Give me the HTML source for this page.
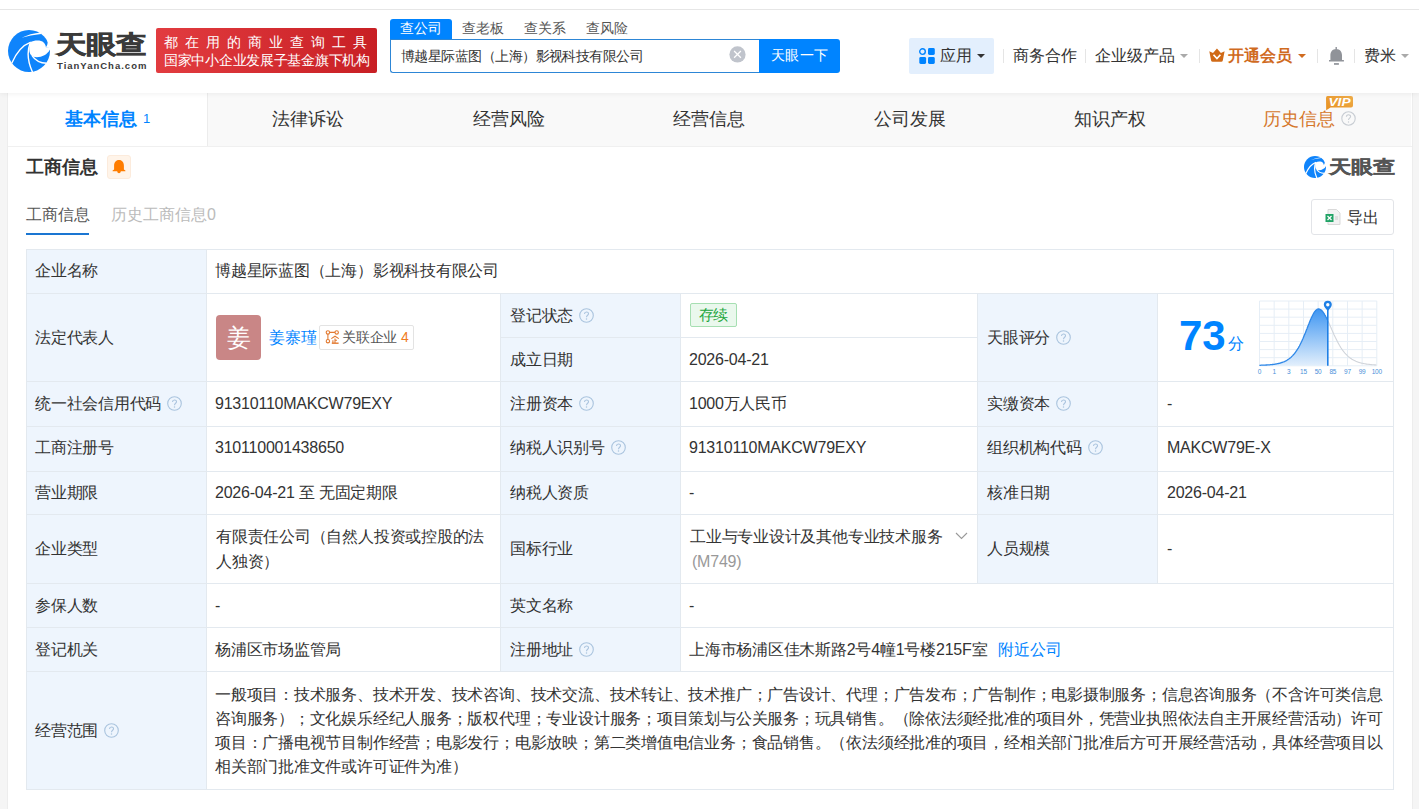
<!DOCTYPE html>
<html><head><meta charset="utf-8">
<style>
*{box-sizing:border-box;margin:0;padding:0}
body{width:1419px;height:809px;overflow:hidden;background:#f5f5f5;position:relative;font-family:"Liberation Sans",sans-serif;color:#333;}
.a{position:absolute;white-space:nowrap}
#hdr{position:absolute;left:0;top:0;width:1419px;height:93px;background:#fff;box-shadow:0 1px 5px rgba(0,0,0,.06);z-index:5}
#topline{position:absolute;left:0;top:9px;width:1419px;height:1px;background:#e6e6e6}
#card{position:absolute;left:7px;top:93px;width:1406px;height:716px;background:#fff;border-left:1px solid #ededed;border-right:1px solid #ededed}
.tab{position:absolute;top:93px;height:53px;background:#f9f9f9;font-size:18px;color:#333;text-align:center;line-height:52px}
.lbl{position:absolute;background:#eef5fd;font-size:16px;letter-spacing:-0.22px;color:#333;padding-left:8px;white-space:nowrap}
.val{position:absolute;font-size:16px;letter-spacing:-0.22px;color:#333;padding-left:8px;white-space:nowrap}
.hl{position:absolute;height:1px;background:#e3e9ef}
.vl{position:absolute;width:1px;background:#e3e9ef}
.q{display:inline-block;width:15px;height:15px;vertical-align:-2px;margin-left:6px}
.avatar{position:absolute;left:9px;top:21px;width:45px;height:45px;background:#c98686;border-radius:4px;color:#fff;font-size:24px;text-align:center;line-height:45px}
.rel{position:absolute;left:112px;top:31px;width:95px;height:25px;border:1px solid #e3e3e3;border-radius:2px;font-size:14px;line-height:23px}
.tag{position:absolute;left:9px;top:9px;width:47px;height:24px;background:#eaf8ed;border:1px solid #a6dfb2;border-radius:2px;color:#22a63d;font-size:15px;text-align:center;line-height:22px}
</style></head><body>
<div id="hdr">
  <div id="topline"></div>
  <!-- logo -->
  <svg class="a" style="left:8px;top:30px" width="42" height="42" viewBox="0 0 42 42">
    <circle cx="21" cy="21" r="21" fill="#0f84fb"/>
    <path d="M22.3 12.3 C 26 10.2, 33 9.8, 35.6 12.6 C 37 14, 37.8 15.5, 37.9 17.2 L 43 17 L 43 19.6 L 41.8 19.7 C 39 25.5, 31 28.5, 25 26.6 C 21 24.5, 20.3 19, 22.3 12.3 Z" fill="#fff"/>
    <path d="M32.2 2.6 C 36.5 4.5, 40 8.5, 39.6 13 C 39.4 14.8, 38.8 16.2, 37.9 17.2 L 43 17 L 43 0 L 32 0 Z" fill="#fff"/>
    <path d="M13.6 7.8 Q 22 3.6, 32.8 2.5 L 33.2 3.9 Q 22 5, 13.6 7.8 Z" fill="#fff"/>
    <path d="M22.8 12.1 C 15 15, 8 23, 3.6 33.5" stroke="#fff" stroke-width="1.4" fill="none"/>
    <path d="M22.3 12.5 C 19.3 20, 18.8 30, 24.8 42.8" stroke="#fff" stroke-width="1.4" fill="none"/>
    <path d="M24.2 25.8 C 27 30, 32 33, 38.8 33.3" stroke="#fff" stroke-width="1.4" fill="none"/>
  </svg>
  <div class="a" style="left:56px;top:30px;font-size:29px;font-weight:bold;color:#3a3a3a;letter-spacing:0px;line-height:34px;-webkit-text-stroke:0.7px #3a3a3a;transform-origin:0 0;transform:scale(1.04,0.85)">天眼查</div>
  <div class="a" style="left:57px;top:60px;font-size:9.5px;font-weight:bold;color:#3a3a3a;letter-spacing:1px;line-height:12px">TianYanCha.com</div>
  <!-- red banner -->
  <div class="a" style="left:156px;top:28px;width:221px;height:45px;border-radius:2px;background:linear-gradient(90deg,#e23c40,#c81f24)"></div>
  <div class="a" style="left:164px;top:34px;font-size:14px;color:#fff;letter-spacing:7.05px;line-height:17px">都在用的商业查询工具</div>
  <div class="a" style="left:164px;top:52px;font-size:14px;letter-spacing:-0.28px;color:#fff;line-height:17px">国家中小企业发展子基金旗下机构</div>
  <!-- search tabs -->
  <div class="a" style="left:390px;top:19px;width:62px;height:21px;background:#0084ff;border-radius:3px 3px 0 0"></div>
  <div class="a" style="left:400px;top:20px;font-size:13.5px;color:#fff;line-height:18px">查公司</div>
  <div class="a" style="left:462px;top:20px;font-size:13.5px;color:#555;line-height:18px">查老板</div>
  <div class="a" style="left:524px;top:20px;font-size:13.5px;color:#555;line-height:18px">查关系</div>
  <div class="a" style="left:586px;top:20px;font-size:13.5px;color:#555;line-height:18px">查风险</div>
  <div class="a" style="left:390px;top:39px;width:372px;height:34px;border:1px solid #2d86d6;border-right:none;border-radius:0 0 0 3px;background:#fff"></div>
  <div class="a" style="left:401px;top:47px;font-size:14px;letter-spacing:-0.55px;color:#333;line-height:18px">博越星际蓝图（上海）影视科技有限公司</div>
  <svg class="a" style="left:729px;top:46px" width="17" height="17" viewBox="0 0 17 17"><circle cx="8.5" cy="8.4" r="8.1" fill="#c0c4cc"/><path d="M5.1 5 L11.9 11.8 M11.9 5 L5.1 11.8" stroke="#fff" stroke-width="1.25"/></svg>
  <div class="a" style="left:759px;top:39px;width:81px;height:34px;background:#0084ff;border-radius:0 3px 3px 0"></div>
  <div class="a" style="left:771px;top:46px;font-size:14px;letter-spacing:0.4px;color:#fff;line-height:18px">天眼一下</div>
  <!-- right nav -->
  <div class="a" style="left:909px;top:38px;width:85px;height:36px;background:#e3effd;border-radius:2px"></div>
  <svg class="a" style="left:919px;top:48px" width="17" height="17" viewBox="0 0 17 17"><circle cx="3.5" cy="3.6" r="2.8" fill="none" stroke="#0084ff" stroke-width="1.4"/><rect x="9" y="0.1" width="6.8" height="6.8" rx="1.4" fill="#0084ff"/><rect x="0.3" y="9.1" width="6.8" height="6.8" rx="1.4" fill="#0084ff"/><rect x="9" y="9.1" width="6.8" height="6.8" rx="1.4" fill="#0084ff"/></svg>
  <div class="a" style="left:940px;top:46px;font-size:15.5px;color:#333;line-height:19px">应用</div>
  <svg class="a" style="left:976px;top:53px" width="10" height="6" viewBox="0 0 10 6"><path d="M1 1 L9 1 L5 5 Z" fill="#333"/></svg>
  <div class="a" style="left:1003px;top:49px;width:1px;height:14px;background:#e5e5e5"></div>
  <div class="a" style="left:1013px;top:46px;font-size:15.5px;color:#333;line-height:19px">商务合作</div>
  <div class="a" style="left:1085px;top:49px;width:1px;height:14px;background:#e5e5e5"></div>
  <div class="a" style="left:1095px;top:46px;font-size:15.5px;color:#333;line-height:19px">企业级产品</div>
  <svg class="a" style="left:1179px;top:53px" width="10" height="6" viewBox="0 0 10 6"><path d="M1 1 L9 1 L5 5 Z" fill="#aaa"/></svg>
  <div class="a" style="left:1199px;top:49px;width:1px;height:14px;background:#e5e5e5"></div>
  <svg class="a" style="left:1206px;top:46px" width="22" height="18" viewBox="0 0 22 18"><path d="M3.3 5.2 L7 6.9 L10.95 2.5 L14.9 6.9 L18.6 5.2 L16.8 14.5 Q16.5 15.7 15.3 15.7 L6.6 15.7 Q5.4 15.7 5.1 14.5 Z" fill="#d06a17"/><path d="M7.5 8.8 L10.95 12.6 L14.4 8.8" stroke="#fff" stroke-width="1.7" fill="none"/></svg>
  <div class="a" style="left:1228px;top:46px;font-size:15.5px;font-weight:bold;color:#d06b1f;line-height:19px">开通会员</div>
  <svg class="a" style="left:1297px;top:53px" width="10" height="6" viewBox="0 0 10 6"><path d="M1 1 L9 1 L5 5 Z" fill="#d06b1f"/></svg>
  <div class="a" style="left:1317px;top:49px;width:1px;height:14px;background:#e5e5e5"></div>
  <svg class="a" style="left:1328px;top:46px" width="17" height="20" viewBox="0 0 17 20"><path d="M8.2 2.9 C 4.5 2.9, 2.4 5.8, 2.4 9 L 2.4 14 L 1 14 L 1 15.4 L 15.9 15.4 L 15.9 14 L 14 14 L 14 9 C 14 5.8, 11.9 2.9, 8.2 2.9 Z" fill="#909399"/><rect x="7.5" y="1" width="1.4" height="2.5" fill="#909399"/><rect x="6" y="17.1" width="4.9" height="1.7" fill="#909399"/></svg>
  <div class="a" style="left:1354px;top:49px;width:1px;height:14px;background:#e5e5e5"></div>
  <div class="a" style="left:1364px;top:46px;font-size:15.5px;color:#333;line-height:19px">费米</div>
  <svg class="a" style="left:1400px;top:53px" width="10" height="6" viewBox="0 0 10 6"><path d="M1 1 L9 1 L5 5 Z" fill="#aaa"/></svg>
</div>

<div id="card"></div>
<!-- tabs -->
<div class="tab" style="left:8px;width:199px;background:#fff;color:#0084ff;font-weight:bold">基本信息<span style="font-size:13px;font-weight:normal;margin-left:6px;vertical-align:2px">1</span></div>
<div class="a" style="left:207px;top:93px;width:1px;height:53px;background:#ececec"></div>
<div class="tab" style="left:208px;width:200px">法律诉讼</div>
<div class="tab" style="left:408px;width:201px">经营风险</div>
<div class="tab" style="left:609px;width:200px">经营信息</div>
<div class="tab" style="left:809px;width:201px">公司发展</div>
<div class="tab" style="left:1010px;width:200px">知识产权</div>
<div class="tab" style="left:1210px;width:201px;color:#d5772c;padding-right:3px">历史信息<svg style="vertical-align:-1px;margin-left:6px" width="15" height="15" viewBox="0 0 15 15"><circle cx="7.5" cy="7.5" r="6.7" fill="none" stroke="#c8cdd3" stroke-width="1.1"/><path d="M5.4 5.8 C5.4 3.2 9.6 3.2 9.6 5.6 C9.6 7.2 7.5 7.2 7.5 9" stroke="#c8cdd3" stroke-width="1.1" fill="none"/><circle cx="7.5" cy="11" r=".7" fill="#c8cdd3"/></svg></div>
<div class="a" style="left:8px;top:146px;width:1404px;height:1px;background:#f0f0f0"></div>
<svg class="a" style="left:1324px;top:95px" width="31" height="17" viewBox="0 0 31 17"><defs><linearGradient id="vg" x1="0" y1="1" x2="1" y2="0"><stop offset="0" stop-color="#e8901f"/><stop offset="1" stop-color="#eeac4a"/></linearGradient></defs><path d="M3.5 1 L27 1 Q29 1 29 3 L29 10.6 Q29 12.6 27 12.6 L6.5 12.6 L2.2 15.2 L2 3 Q2 1 3.5 1 Z" fill="url(#vg)"/><text x="15.5" y="10.9" font-family="Liberation Sans" font-size="10.5" font-weight="bold" font-style="italic" fill="#fff" text-anchor="middle" textLength="22" lengthAdjust="spacingAndGlyphs">VIP</text></svg>

<!-- section title -->
<div class="a" style="left:26px;top:155px;font-size:18px;font-weight:bold;color:#333;line-height:24px">工商信息</div>
<div class="a" style="left:107px;top:155px;width:24px;height:24px;background:#fff4e9;border:1px solid #fcebdc;border-radius:3px"></div>
<svg class="a" style="left:112px;top:159px" width="14" height="16" viewBox="0 0 14 16"><path d="M7 1 C 3.8 1, 2.1 3.5, 2.1 6.8 L 2.1 10.6 L 0.6 11.4 L 0.6 12.2 L 13.4 12.2 L 13.4 11.4 L 11.9 10.6 L 11.9 6.8 C 11.9 3.5, 10.2 1, 7 1 Z" fill="#ff7d00"/><circle cx="7" cy="12.6" r="1.7" fill="#ff7d00"/></svg>
<!-- right logo -->
<svg class="a" style="left:1304px;top:156px" width="22" height="22" viewBox="0 0 42 42">
    <circle cx="21" cy="21" r="21" fill="#0f84fb"/>
    <path d="M22.3 12.3 C 26 10.2, 33 9.8, 35.6 12.6 C 37 14, 37.8 15.5, 37.9 17.2 L 43 17 L 43 19.6 L 41.8 19.7 C 39 25.5, 31 28.5, 25 26.6 C 21 24.5, 20.3 19, 22.3 12.3 Z" fill="#fff"/>
    <path d="M32.2 2.6 C 36.5 4.5, 40 8.5, 39.6 13 C 39.4 14.8, 38.8 16.2, 37.9 17.2 L 43 17 L 43 0 L 32 0 Z" fill="#fff"/>
    <path d="M13.6 7.8 Q 22 3.6, 32.8 2.5 L 33.2 3.9 Q 22 5, 13.6 7.8 Z" fill="#fff"/>
    <path d="M22.8 12.1 C 15 15, 8 23, 3.6 33.5" stroke="#fff" stroke-width="2.2" fill="none"/>
    <path d="M22.3 12.5 C 19.3 20, 18.8 30, 24.8 42.8" stroke="#fff" stroke-width="2.2" fill="none"/>
    <path d="M24.2 25.8 C 27 30, 32 33, 38.8 33.3" stroke="#fff" stroke-width="2.2" fill="none"/>
</svg>
<div class="a" style="left:1329px;top:157px;font-size:21px;font-weight:bold;color:#555;line-height:24px;-webkit-text-stroke:0.4px #555;transform-origin:0 0;transform:scale(1.04,0.84)">天眼查</div>

<!-- sub tabs -->
<div class="a" style="left:26px;top:205px;font-size:16px;color:#555;line-height:20px">工商信息</div>
<div class="a" style="left:26px;top:233px;width:63px;height:2px;background:#1a76d2"></div>
<div class="a" style="left:111px;top:205px;font-size:16px;color:#bbb;line-height:20px">历史工商信息0</div>
<!-- export -->
<div class="a" style="left:1311px;top:199px;width:83px;height:36px;border:1px solid #e2e4e8;border-radius:3px;background:#fff"></div>
<svg class="a" style="left:1325px;top:209px" width="16" height="16" viewBox="0 0 16 16"><path d="M3 0.5 L11.5 0.5 L15 4 L15 15.5 L3 15.5 Z" fill="#f2f2f2" stroke="#d9d9d9" stroke-width="1"/><rect x="0.5" y="5" width="8" height="8" fill="#21a366"/><path d="M2.5 7 L6.5 11 M6.5 7 L2.5 11" stroke="#fff" stroke-width="1.2"/><path d="M10 8 L13 8 M10 10 L13 10" stroke="#ccc" stroke-width="1"/></svg>
<div class="a" style="left:1347px;top:208px;font-size:16px;color:#333;line-height:20px">导出</div>

<!-- TABLE -->
<div class="lbl" style="left:27px;top:250px;width:179px;height:43px;line-height:41px;padding-left:8px">企业名称</div>
<div class="val" style="left:207px;top:250px;width:1186px;height:43px;line-height:41px;padding-left:8px;">博越星际蓝图（上海）影视科技有限公司</div>
<div class="lbl" style="left:27px;top:294px;width:179px;height:87px;line-height:87px;padding-left:8px">法定代表人</div>
<div class="val" style="left:207px;top:294px;width:293px;height:87px;line-height:87px;padding-left:8px;"><div class="avatar">姜</div><span style="position:absolute;left:62px;top:0;color:#0084ff">姜寨瑾</span><div class="rel"><svg style="position:absolute;left:5px;top:3px" width="15" height="16" viewBox="0 0 15 16"><g stroke="#e27a32" stroke-width="1.1" fill="none"><circle cx="2.9" cy="3.4" r="1.7"/><circle cx="11.7" cy="3.4" r="1.7"/><circle cx="2.9" cy="12.2" r="1.7"/><path d="M4.6 3.4 L10 3.4 M2.9 5.1 L2.9 10.5 M6.3 9.6 L10 7.2 L13.8 9.6 M10 9.4 L10 14 M7.9 11.2 L7.9 14 M10 11.3 L12 11.3"/><path d="M6.8 14.2 L13.6 14.2" stroke-width="1.4"/></g></svg><span style="position:absolute;left:22px;top:0;color:#555">关联企业</span><span style="position:absolute;left:81px;top:0;color:#f07c1e">4</span></div></div>
<div class="lbl" style="left:501px;top:294px;width:179px;height:43px;line-height:43px;padding-left:9px">登记状态<svg class="q" viewBox="0 0 15 15"><circle cx="7.5" cy="7.5" r="6.8" fill="none" stroke="#aac4de" stroke-width="1.1"/><path d="M5.5 5.9 C5.5 3.4 9.5 3.4 9.5 5.7 C9.5 7.3 7.5 7.2 7.5 9.2" stroke="#aac4de" stroke-width="1.1" fill="none"/><circle cx="7.5" cy="11.1" r=".75" fill="#aac4de"/></svg></div>
<div class="val" style="left:681px;top:294px;width:296px;height:43px;line-height:43px;padding-left:8px;"><div class="tag">存续</div></div>
<div class="lbl" style="left:501px;top:338px;width:179px;height:43px;line-height:43px;padding-left:9px">成立日期</div>
<div class="val" style="left:681px;top:338px;width:296px;height:43px;line-height:43px;padding-left:8px;">2026-04-21</div>
<div class="lbl" style="left:978px;top:294px;width:179px;height:87px;line-height:87px;padding-left:9px">天眼评分<svg class="q" viewBox="0 0 15 15"><circle cx="7.5" cy="7.5" r="6.8" fill="none" stroke="#aac4de" stroke-width="1.1"/><path d="M5.5 5.9 C5.5 3.4 9.5 3.4 9.5 5.7 C9.5 7.3 7.5 7.2 7.5 9.2" stroke="#aac4de" stroke-width="1.1" fill="none"/><circle cx="7.5" cy="11.1" r=".75" fill="#aac4de"/></svg></div>
<div class="val" style="left:1158px;top:294px;width:235px;height:87px;line-height:87px;padding-left:9px;"><span style="position:absolute;left:21px;top:18px;font-size:42px;font-weight:bold;color:#0084ff;line-height:47px">73</span><span style="position:absolute;left:70px;top:40px;font-size:16px;color:#0084ff;line-height:20px">分</span><svg style="position:absolute;left:97px;top:4px" width="128" height="80" viewBox="0 0 128 80"><defs><linearGradient id="g1" x1="0" y1="0" x2="0" y2="1"><stop offset="0" stop-color="#3f96f2"/><stop offset="1" stop-color="#e2effc"/></linearGradient></defs><path d="M4.50 3 L4.50 67.8" stroke="#e6eef6" stroke-width="1"/><path d="M19.16 3 L19.16 67.8" stroke="#e6eef6" stroke-width="1"/><path d="M33.83 3 L33.83 67.8" stroke="#e6eef6" stroke-width="1"/><path d="M48.49 3 L48.49 67.8" stroke="#e6eef6" stroke-width="1"/><path d="M63.15 3 L63.15 67.8" stroke="#e6eef6" stroke-width="1"/><path d="M77.81 3 L77.81 67.8" stroke="#e6eef6" stroke-width="1"/><path d="M92.47 3 L92.47 67.8" stroke="#e6eef6" stroke-width="1"/><path d="M107.14 3 L107.14 67.8" stroke="#e6eef6" stroke-width="1"/><path d="M121.80 3 L121.80 67.8" stroke="#e6eef6" stroke-width="1"/><path d="M4.5 3.00 L121.8 3.00" stroke="#e6eef6" stroke-width="1"/><path d="M4.5 11.10 L121.8 11.10" stroke="#e6eef6" stroke-width="1"/><path d="M4.5 19.20 L121.8 19.20" stroke="#e6eef6" stroke-width="1"/><path d="M4.5 27.30 L121.8 27.30" stroke="#e6eef6" stroke-width="1"/><path d="M4.5 35.40 L121.8 35.40" stroke="#e6eef6" stroke-width="1"/><path d="M4.5 43.50 L121.8 43.50" stroke="#e6eef6" stroke-width="1"/><path d="M4.5 51.60 L121.8 51.60" stroke="#e6eef6" stroke-width="1"/><path d="M4.5 59.70 L121.8 59.70" stroke="#e6eef6" stroke-width="1"/><path d="M4.5 67.80 L121.8 67.80" stroke="#e6eef6" stroke-width="1"/><path d="M4.4 67.3 L4.9 67.3 L5.4 67.3 L5.9 67.2 L6.4 67.2 L6.9 67.2 L7.4 67.2 L7.9 67.2 L8.4 67.2 L8.9 67.1 L9.4 67.1 L9.9 67.1 L10.4 67.1 L10.9 67.0 L11.4 67.0 L11.9 67.0 L12.4 66.9 L12.9 66.9 L13.4 66.9 L13.9 66.8 L14.4 66.8 L14.9 66.8 L15.4 66.7 L15.9 66.7 L16.4 66.6 L16.9 66.6 L17.4 66.5 L17.9 66.5 L18.4 66.4 L18.9 66.3 L19.4 66.3 L19.9 66.2 L20.4 66.1 L20.9 66.0 L21.4 65.9 L21.9 65.8 L22.4 65.7 L22.9 65.6 L23.4 65.5 L23.9 65.4 L24.4 65.3 L24.9 65.1 L25.4 65.0 L25.9 64.9 L26.4 64.7 L26.9 64.5 L27.4 64.4 L27.9 64.2 L28.4 64.0 L28.9 63.8 L29.4 63.6 L29.9 63.3 L30.4 63.1 L30.9 62.8 L31.4 62.6 L31.9 62.3 L32.4 62.0 L32.9 61.6 L33.4 61.3 L33.9 61.0 L34.4 60.6 L34.9 60.2 L35.4 59.8 L35.9 59.4 L36.4 58.9 L36.9 58.4 L37.4 57.9 L37.9 57.4 L38.4 56.8 L38.9 56.3 L39.4 55.7 L39.9 55.0 L40.4 54.4 L40.9 53.7 L41.4 53.0 L41.9 52.2 L42.4 51.4 L42.9 50.6 L43.4 49.8 L43.9 48.9 L44.4 48.0 L44.9 47.0 L45.4 46.0 L45.9 45.0 L46.4 44.0 L46.9 42.9 L47.4 41.8 L47.9 40.7 L48.4 39.5 L48.9 38.3 L49.4 37.1 L49.9 35.9 L50.4 34.7 L50.9 33.4 L51.4 32.1 L51.9 30.9 L52.4 29.6 L52.9 28.3 L53.4 27.0 L53.9 25.8 L54.4 24.5 L54.9 23.3 L55.4 22.1 L55.9 20.9 L56.4 19.8 L56.9 18.7 L57.4 17.7 L57.9 16.7 L58.4 15.8 L58.9 14.9 L59.4 14.2 L59.9 13.5 L60.4 12.8 L60.9 12.3 L61.4 11.9 L61.9 11.5 L62.4 11.2 L62.9 11.1 L63.4 11.0 L63.9 11.0 L64.4 11.1 L64.9 11.3 L65.4 11.6 L65.9 11.9 L66.4 12.3 L66.9 12.8 L67.4 13.3 L67.9 13.9 L68.4 14.6 L68.9 15.3 L69.4 16.1 L69.9 17.0 L70.4 17.8 L70.9 18.8 L71.4 19.7 L71.9 20.7 L72.4 21.8 L72.8 67.8 L4.4 67.8 Z" fill="url(#g1)"/><path d="M4.4 67.3 L4.9 67.3 L5.4 67.3 L5.9 67.2 L6.4 67.2 L6.9 67.2 L7.4 67.2 L7.9 67.2 L8.4 67.2 L8.9 67.1 L9.4 67.1 L9.9 67.1 L10.4 67.1 L10.9 67.0 L11.4 67.0 L11.9 67.0 L12.4 66.9 L12.9 66.9 L13.4 66.9 L13.9 66.8 L14.4 66.8 L14.9 66.8 L15.4 66.7 L15.9 66.7 L16.4 66.6 L16.9 66.6 L17.4 66.5 L17.9 66.5 L18.4 66.4 L18.9 66.3 L19.4 66.3 L19.9 66.2 L20.4 66.1 L20.9 66.0 L21.4 65.9 L21.9 65.8 L22.4 65.7 L22.9 65.6 L23.4 65.5 L23.9 65.4 L24.4 65.3 L24.9 65.1 L25.4 65.0 L25.9 64.9 L26.4 64.7 L26.9 64.5 L27.4 64.4 L27.9 64.2 L28.4 64.0 L28.9 63.8 L29.4 63.6 L29.9 63.3 L30.4 63.1 L30.9 62.8 L31.4 62.6 L31.9 62.3 L32.4 62.0 L32.9 61.6 L33.4 61.3 L33.9 61.0 L34.4 60.6 L34.9 60.2 L35.4 59.8 L35.9 59.4 L36.4 58.9 L36.9 58.4 L37.4 57.9 L37.9 57.4 L38.4 56.8 L38.9 56.3 L39.4 55.7 L39.9 55.0 L40.4 54.4 L40.9 53.7 L41.4 53.0 L41.9 52.2 L42.4 51.4 L42.9 50.6 L43.4 49.8 L43.9 48.9 L44.4 48.0 L44.9 47.0 L45.4 46.0 L45.9 45.0 L46.4 44.0 L46.9 42.9 L47.4 41.8 L47.9 40.7 L48.4 39.5 L48.9 38.3 L49.4 37.1 L49.9 35.9 L50.4 34.7 L50.9 33.4 L51.4 32.1 L51.9 30.9 L52.4 29.6 L52.9 28.3 L53.4 27.0 L53.9 25.8 L54.4 24.5 L54.9 23.3 L55.4 22.1 L55.9 20.9 L56.4 19.8 L56.9 18.7 L57.4 17.7 L57.9 16.7 L58.4 15.8 L58.9 14.9 L59.4 14.2 L59.9 13.5 L60.4 12.8 L60.9 12.3 L61.4 11.9 L61.9 11.5 L62.4 11.2 L62.9 11.1 L63.4 11.0 L63.9 11.0 L64.4 11.1 L64.9 11.3 L65.4 11.6 L65.9 11.9 L66.4 12.3 L66.9 12.8 L67.4 13.3 L67.9 13.9 L68.4 14.6 L68.9 15.3 L69.4 16.1 L69.9 17.0 L70.4 17.8 L70.9 18.8 L71.4 19.7 L71.9 20.7 L72.4 21.8" stroke="#2f88e8" stroke-width="1.3" fill="none"/><path d="M72.9 22.9 L73.4 23.9 L73.9 25.0 L74.4 26.2 L74.9 27.3 L75.4 28.4 L75.9 29.6 L76.4 30.7 L76.9 31.9 L77.4 33.0 L77.9 34.1 L78.4 35.2 L78.9 36.4 L79.4 37.4 L79.9 38.5 L80.4 39.6 L80.9 40.6 L81.4 41.6 L81.9 42.6 L82.4 43.6 L82.9 44.5 L83.4 45.4 L83.9 46.3 L84.4 47.2 L84.9 48.0 L85.4 48.9 L85.9 49.7 L86.4 50.4 L86.9 51.2 L87.4 51.9 L87.9 52.6 L88.4 53.2 L88.9 53.9 L89.4 54.5 L89.9 55.1 L90.4 55.6 L90.9 56.2 L91.4 56.7 L91.9 57.2 L92.4 57.7 L92.9 58.1 L93.4 58.6 L93.9 59.0 L94.4 59.4 L94.9 59.8 L95.4 60.2 L95.9 60.5 L96.4 60.8 L96.9 61.2 L97.4 61.5 L97.9 61.8 L98.4 62.0 L98.9 62.3 L99.4 62.6 L99.9 62.8 L100.4 63.0 L100.9 63.3 L101.4 63.5 L101.9 63.7 L102.4 63.9 L102.9 64.0 L103.4 64.2 L103.9 64.4 L104.4 64.5 L104.9 64.7 L105.4 64.8 L105.9 65.0 L106.4 65.1 L106.9 65.2 L107.4 65.3 L107.9 65.4 L108.4 65.5 L108.9 65.6 L109.4 65.7 L109.9 65.8 L110.4 65.9 L110.9 66.0 L111.4 66.1 L111.9 66.1 L112.4 66.2 L112.9 66.3 L113.4 66.3 L113.9 66.4 L114.4 66.4 L114.9 66.5 L115.4 66.5 L115.9 66.6 L116.4 66.6 L116.9 66.7 L117.4 66.7 L117.9 66.8 L118.4 66.8 L118.9 66.8 L119.4 66.9 L119.9 66.9 L120.4 66.9 L120.9 67.0 L121.4 67.0" stroke="#d0d4da" stroke-width="1.1" fill="none"/><path d="M72.8 10 L72.8 67.8" stroke="#1f80e6" stroke-width="1.6"/><path d="M72.8 13 C 70.8 10.5, 68.8 9, 68.8 6.8 A 4 4 0 1 1 76.8 6.8 C 76.8 9, 74.8 10.5, 72.8 13 Z" fill="#1f80e6"/><circle cx="72.8" cy="6.8" r="1.7" fill="#fff"/><text x="4.5" y="76" font-size="6.5" fill="#4a90d9" text-anchor="middle" font-family="Liberation Sans">0</text><text x="19.2" y="76" font-size="6.5" fill="#4a90d9" text-anchor="middle" font-family="Liberation Sans">1</text><text x="33.8" y="76" font-size="6.5" fill="#4a90d9" text-anchor="middle" font-family="Liberation Sans">3</text><text x="48.5" y="76" font-size="6.5" fill="#4a90d9" text-anchor="middle" font-family="Liberation Sans">15</text><text x="63.1" y="76" font-size="6.5" fill="#4a90d9" text-anchor="middle" font-family="Liberation Sans">50</text><text x="77.8" y="76" font-size="6.5" fill="#4a90d9" text-anchor="middle" font-family="Liberation Sans">85</text><text x="92.5" y="76" font-size="6.5" fill="#4a90d9" text-anchor="middle" font-family="Liberation Sans">97</text><text x="107.1" y="76" font-size="6.5" fill="#4a90d9" text-anchor="middle" font-family="Liberation Sans">99</text><text x="121.8" y="76" font-size="6.5" fill="#4a90d9" text-anchor="middle" font-family="Liberation Sans">100</text></svg></div>
<div class="lbl" style="left:27px;top:382px;width:179px;height:44px;line-height:44px;padding-left:8px">统一社会信用代码<svg class="q" viewBox="0 0 15 15"><circle cx="7.5" cy="7.5" r="6.8" fill="none" stroke="#aac4de" stroke-width="1.1"/><path d="M5.5 5.9 C5.5 3.4 9.5 3.4 9.5 5.7 C9.5 7.3 7.5 7.2 7.5 9.2" stroke="#aac4de" stroke-width="1.1" fill="none"/><circle cx="7.5" cy="11.1" r=".75" fill="#aac4de"/></svg></div>
<div class="val" style="left:207px;top:382px;width:293px;height:44px;line-height:44px;padding-left:8px;">91310110MAKCW79EXY</div>
<div class="lbl" style="left:501px;top:382px;width:179px;height:44px;line-height:44px;padding-left:9px">注册资本<svg class="q" viewBox="0 0 15 15"><circle cx="7.5" cy="7.5" r="6.8" fill="none" stroke="#aac4de" stroke-width="1.1"/><path d="M5.5 5.9 C5.5 3.4 9.5 3.4 9.5 5.7 C9.5 7.3 7.5 7.2 7.5 9.2" stroke="#aac4de" stroke-width="1.1" fill="none"/><circle cx="7.5" cy="11.1" r=".75" fill="#aac4de"/></svg></div>
<div class="val" style="left:681px;top:382px;width:296px;height:44px;line-height:44px;padding-left:8px;">1000万人民币</div>
<div class="lbl" style="left:978px;top:382px;width:179px;height:44px;line-height:44px;padding-left:9px">实缴资本<svg class="q" viewBox="0 0 15 15"><circle cx="7.5" cy="7.5" r="6.8" fill="none" stroke="#aac4de" stroke-width="1.1"/><path d="M5.5 5.9 C5.5 3.4 9.5 3.4 9.5 5.7 C9.5 7.3 7.5 7.2 7.5 9.2" stroke="#aac4de" stroke-width="1.1" fill="none"/><circle cx="7.5" cy="11.1" r=".75" fill="#aac4de"/></svg></div>
<div class="val" style="left:1158px;top:382px;width:235px;height:44px;line-height:44px;padding-left:9px;">-</div>
<div class="lbl" style="left:27px;top:427px;width:179px;height:44px;line-height:42px;padding-left:8px">工商注册号</div>
<div class="val" style="left:207px;top:427px;width:293px;height:44px;line-height:42px;padding-left:8px;">310110001438650</div>
<div class="lbl" style="left:501px;top:427px;width:179px;height:44px;line-height:42px;padding-left:9px">纳税人识别号<svg class="q" viewBox="0 0 15 15"><circle cx="7.5" cy="7.5" r="6.8" fill="none" stroke="#aac4de" stroke-width="1.1"/><path d="M5.5 5.9 C5.5 3.4 9.5 3.4 9.5 5.7 C9.5 7.3 7.5 7.2 7.5 9.2" stroke="#aac4de" stroke-width="1.1" fill="none"/><circle cx="7.5" cy="11.1" r=".75" fill="#aac4de"/></svg></div>
<div class="val" style="left:681px;top:427px;width:296px;height:44px;line-height:42px;padding-left:8px;">91310110MAKCW79EXY</div>
<div class="lbl" style="left:978px;top:427px;width:179px;height:44px;line-height:42px;padding-left:9px">组织机构代码<svg class="q" viewBox="0 0 15 15"><circle cx="7.5" cy="7.5" r="6.8" fill="none" stroke="#aac4de" stroke-width="1.1"/><path d="M5.5 5.9 C5.5 3.4 9.5 3.4 9.5 5.7 C9.5 7.3 7.5 7.2 7.5 9.2" stroke="#aac4de" stroke-width="1.1" fill="none"/><circle cx="7.5" cy="11.1" r=".75" fill="#aac4de"/></svg></div>
<div class="val" style="left:1158px;top:427px;width:235px;height:44px;line-height:42px;padding-left:9px;">MAKCW79E-X</div>
<div class="lbl" style="left:27px;top:472px;width:179px;height:42px;line-height:42px;padding-left:8px">营业期限</div>
<div class="val" style="left:207px;top:472px;width:293px;height:42px;line-height:42px;padding-left:8px;">2026-04-21 至 无固定期限</div>
<div class="lbl" style="left:501px;top:472px;width:179px;height:42px;line-height:42px;padding-left:9px">纳税人资质</div>
<div class="val" style="left:681px;top:472px;width:296px;height:42px;line-height:42px;padding-left:8px;">-</div>
<div class="lbl" style="left:978px;top:472px;width:179px;height:42px;line-height:42px;padding-left:9px">核准日期</div>
<div class="val" style="left:1158px;top:472px;width:235px;height:42px;line-height:42px;padding-left:9px;">2026-04-21</div>
<div class="lbl" style="left:27px;top:515px;width:179px;height:68px;line-height:68px;padding-left:8px">企业类型</div>
<div class="val" style="left:207px;top:515px;width:293px;height:68px;line-height:68px;padding-left:8px;"><div style="position:absolute;left:9px;top:9px;line-height:25px;white-space:normal;width:280px">有限责任公司（自然人投资或控股的法<br>人独资）</div></div>
<div class="lbl" style="left:501px;top:515px;width:179px;height:68px;line-height:68px;padding-left:9px">国标行业</div>
<div class="val" style="left:681px;top:515px;width:296px;height:68px;line-height:68px;padding-left:8px;"><div style="position:absolute;left:9px;top:9px;line-height:25px;white-space:normal;width:270px">工业与专业设计及其他专业技术服务<br><span style="color:#999;margin-left:2px">(M749)</span></div><svg style="position:absolute;left:274px;top:17px" width="13" height="8" viewBox="0 0 13 8"><path d="M1 1 L6.5 6.5 L12 1" stroke="#999" stroke-width="1.1" fill="none"/></svg></div>
<div class="lbl" style="left:978px;top:515px;width:179px;height:68px;line-height:68px;padding-left:9px">人员规模</div>
<div class="val" style="left:1158px;top:515px;width:235px;height:68px;line-height:68px;padding-left:9px;">-</div>
<div class="lbl" style="left:27px;top:584px;width:179px;height:43px;line-height:43px;padding-left:8px">参保人数</div>
<div class="val" style="left:207px;top:584px;width:293px;height:43px;line-height:43px;padding-left:8px;">-</div>
<div class="lbl" style="left:501px;top:584px;width:179px;height:43px;line-height:43px;padding-left:9px">英文名称</div>
<div class="val" style="left:681px;top:584px;width:712px;height:43px;line-height:43px;padding-left:8px;">-</div>
<div class="lbl" style="left:27px;top:628px;width:179px;height:43px;line-height:43px;padding-left:8px">登记机关</div>
<div class="val" style="left:207px;top:628px;width:293px;height:43px;line-height:43px;padding-left:8px;">杨浦区市场监管局</div>
<div class="lbl" style="left:501px;top:628px;width:179px;height:43px;line-height:43px;padding-left:9px">注册地址<svg class="q" viewBox="0 0 15 15"><circle cx="7.5" cy="7.5" r="6.8" fill="none" stroke="#aac4de" stroke-width="1.1"/><path d="M5.5 5.9 C5.5 3.4 9.5 3.4 9.5 5.7 C9.5 7.3 7.5 7.2 7.5 9.2" stroke="#aac4de" stroke-width="1.1" fill="none"/><circle cx="7.5" cy="11.1" r=".75" fill="#aac4de"/></svg></div>
<div class="val" style="left:681px;top:628px;width:712px;height:43px;line-height:43px;padding-left:8px;">上海市杨浦区佳木斯路2号4幢1号楼215F室<span style="color:#0084ff;margin-left:11px">附近公司</span></div>
<div class="lbl" style="left:27px;top:672px;width:179px;height:117px;line-height:117px;padding-left:8px">经营范围<svg class="q" viewBox="0 0 15 15"><circle cx="7.5" cy="7.5" r="6.8" fill="none" stroke="#aac4de" stroke-width="1.1"/><path d="M5.5 5.9 C5.5 3.4 9.5 3.4 9.5 5.7 C9.5 7.3 7.5 7.2 7.5 9.2" stroke="#aac4de" stroke-width="1.1" fill="none"/><circle cx="7.5" cy="11.1" r=".75" fill="#aac4de"/></svg></div>
<div class="val" style="left:207px;top:672px;width:1186px;height:117px;line-height:117px;padding-left:8px;"><div style="position:absolute;left:8px;top:11px;line-height:24px;white-space:nowrap">一般项目：技术服务、技术开发、技术咨询、技术交流、技术转让、技术推广；广告设计、代理；广告发布；广告制作；电影摄制服务；信息咨询服务（不含许可类信息<br>咨询服务）；文化娱乐经纪人服务；版权代理；专业设计服务；项目策划与公关服务；玩具销售。（除依法须经批准的项目外，凭营业执照依法自主开展经营活动）许可<br>项目：广播电视节目制作经营；电影发行；电影放映；第二类增值电信业务；食品销售。（依法须经批准的项目，经相关部门批准后方可开展经营活动，具体经营项目以<br>相关部门批准文件或许可证件为准）</div></div>
<div class="hl" style="left:26px;top:249px;width:1368px"></div>
<div class="hl" style="left:26px;top:293px;width:1368px"></div>
<div class="hl" style="left:26px;top:381px;width:1368px"></div>
<div class="hl" style="left:26px;top:426px;width:1368px"></div>
<div class="hl" style="left:26px;top:471px;width:1368px"></div>
<div class="hl" style="left:26px;top:514px;width:1368px"></div>
<div class="hl" style="left:26px;top:583px;width:1368px"></div>
<div class="hl" style="left:26px;top:627px;width:1368px"></div>
<div class="hl" style="left:26px;top:671px;width:1368px"></div>
<div class="hl" style="left:26px;top:789px;width:1368px"></div>
<div class="hl" style="left:500px;top:337px;width:478px"></div>
<div class="vl" style="left:26px;top:249px;height:541px"></div>
<div class="vl" style="left:1393px;top:249px;height:541px"></div>
<div class="vl" style="left:206px;top:249px;height:541px"></div>
<div class="vl" style="left:500px;top:293px;height:379px"></div>
<div class="vl" style="left:680px;top:293px;height:379px"></div>
<div class="vl" style="left:977px;top:293px;height:291px"></div>
<div class="vl" style="left:1157px;top:293px;height:291px"></div>
<!-- /TABLE -->
</body></html>
